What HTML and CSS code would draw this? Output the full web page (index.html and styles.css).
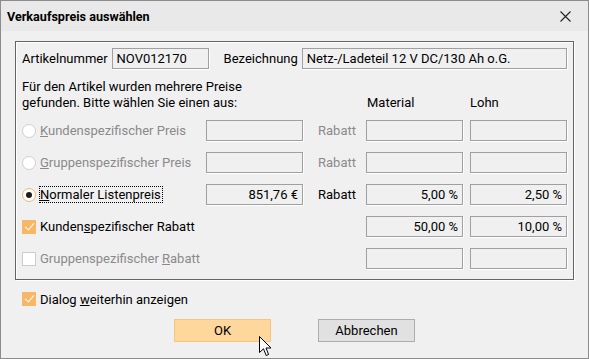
FILE: index.html
```html
<!DOCTYPE html>
<html lang="de">
<head>
    <meta charset="UTF-8">
    <title>Verkaufspreis auswählen</title>
    <link rel="stylesheet" href="styles.css">
</head>
<body>
    <div class="window">
        <div class="titlebar">
            <span class="title">Verkaufspreis auswählen</span>
            <svg class="close" width="11" height="11" viewBox="0 0 11 11">
                <path d="M0.5 0.5 L10.5 10.5 M10.5 0.5 L0.5 10.5" stroke="#222" stroke-width="1.1" fill="none"/>
            </svg>
        </div>

        <div class="content">
            <div class="group">
                <div class="top-row">
                    <span class="label">Artikelnummer</span>
                    <div class="field field-nr">NOV012170</div>
                    <span class="label label-bez">Bezeichnung</span>
                    <div class="field field-bez">Netz-/Ladeteil 12 V DC/130 Ah o.G.</div>
                </div>

                <div class="price-grid">
                    <div class="intro">Für den Artikel wurden mehrere Preise<br>gefunden. Bitte wählen Sie einen aus:</div>
                    <div class="col-head">Material</div>
                    <div class="col-head lohn">Lohn</div>

                    <!-- Kundenspezifischer Preis -->
                    <label class="option disabled"><span class="radio"></span><span><u>K</u>undenspezifischer Preis</span></label>
                    <div class="field"></div>
                    <span class="rabatt disabled">Rabatt</span>
                    <div class="field"></div>
                    <div class="field lohn"></div>

                    <!-- Gruppenspezifischer Preis -->
                    <label class="option disabled"><span class="radio"></span><span><u>G</u>ruppenspezifischer Preis</span></label>
                    <div class="field"></div>
                    <span class="rabatt disabled">Rabatt</span>
                    <div class="field"></div>
                    <div class="field lohn"></div>

                    <!-- Normaler Listenpreis -->
                    <label class="option"><span class="radio checked"></span><span class="focus"><u>N</u>ormaler Listenpreis</span></label>
                    <div class="field num">851,76 €</div>
                    <span class="rabatt">Rabatt</span>
                    <div class="field num">5,00 %</div>
                    <div class="field num lohn">2,50 %</div>

                    <!-- Rabatte -->
                    <label class="option"><span class="check checked"></span><span>Kunden<u>s</u>pezifischer Rabatt</span></label>
                    <span></span>
                    <span></span>
                    <div class="field num">50,00 %</div>
                    <div class="field num lohn">10,00 %</div>

                    <label class="option disabled clip"><span class="check"></span><span>Gruppenspezifischer <u>R</u>abatt</span></label>
                    <span></span>
                    <span></span>
                    <div class="field"></div>
                    <div class="field lohn"></div>
                </div>
            </div>

            <label class="option show-again"><span class="check checked"></span><span>Dialog <u>w</u>eiterhin anzeigen</span></label>

            <div class="buttons">
                <button class="btn btn-ok">OK</button>
                <button class="btn">Abbrechen</button>
            </div>
        </div>

        <svg class="cursor" width="13" height="21" viewBox="0 0 13 21">
            <path d="M0.5 0.5 L0.5 16.5 L4.5 12.8 L7.2 19.5 L9.6 18.5 L7 12 L12 12 Z" fill="#fff" stroke="#000" stroke-width="1"/>
        </svg>
    </div>
</body>
</html>
```

FILE: styles.css
```css
* {
    box-sizing: border-box;
}

body {
    margin: 0;
    font-family: Roboto, "Noto Sans", Arial, sans-serif;
    font-size: 13px;
    color: #000;
    background-color: #f0f0f0;
}

.window {
    position: relative;
    width: 589px;
    height: 359px;
    border: 1px solid #8c8c8c;
    background-color: #f0f0f0;
}

.titlebar {
    height: 30px;
    display: flex;
    align-items: center;
    justify-content: space-between;
    padding: 0 17px 0 6px;
    background-color: #e9e9e9;
}

.title {
    font-weight: bold;
    font-size: 12.6px;
}

.close {
    display: block;
}

.content {
    padding: 10px 14px 0 14px;
}

/* Gruppenrahmen mit 3D-Effekt */
.group {
    width: 559px;
    height: 239px;
    border: 1px solid #646464;
    box-shadow: 1px 1px 0 #fff, inset 1px 1px 0 #fff;
    padding: 6px 5px 0 6px;
}

.top-row {
    display: flex;
    align-items: center;
    height: 21px;
}

.label-bez {
    margin-left: 15px;
}

.field {
    height: 21px;
    border: 1px solid #a0a0a0;
    box-shadow: 1px 1px 0 #fff;
    background-color: #f0f0f0;
    padding: 0 4px;
    display: flex;
    align-items: center;
    white-space: nowrap;
    overflow: hidden;
}

.field-nr {
    width: 97px;
    margin-left: 4px;
}

.field-bez {
    width: 265px;
    margin-left: 4px;
}

.field.num {
    justify-content: flex-end;
}

.price-grid {
    display: grid;
    grid-template-columns: 184px 97px 63px 97px 104px;
    grid-template-rows: 30px repeat(5, 21px);
    row-gap: 11px;
    margin-top: 10px;
}

.intro {
    grid-column: 1 / 4;
    line-height: 16px;
}

.col-head {
    align-self: end;
    line-height: 16px;
    margin-bottom: -2px;
    padding-left: 1px;
}

/* Lohn-Spalte: 7px Abstand zur Material-Spalte */
.lohn {
    margin-left: 7px;
}

.col-head.lohn {
    padding-left: 0;
}

.rabatt {
    display: flex;
    align-items: center;
    padding-left: 15px;
}

.disabled {
    color: #8a8a8a;
}

.option {
    display: flex;
    align-items: center;
    gap: 4px;
    white-space: nowrap;
}

.option.clip {
    overflow: hidden;
    width: 178px;
}

.radio {
    width: 14px;
    height: 14px;
    border-radius: 50%;
    border: 1px solid #cfcfcf;
    background-color: #fff;
    flex-shrink: 0;
    display: flex;
    align-items: center;
    justify-content: center;
}

.radio.checked {
    border-color: #f5b56a;
}

.radio.checked::after {
    content: "";
    width: 6px;
    height: 6px;
    border-radius: 50%;
    background-color: #1c1c1c;
}

.focus {
    outline: 1px dotted #000;
    padding-right: 1px;
    line-height: 15px;
}

.check {
    width: 14px;
    height: 14px;
    border: 1px solid #cccccc;
    background-color: #fff;
    flex-shrink: 0;
    position: relative;
}

.check.checked {
    border-color: #f7b766;
    background-color: #f7b766;
}

.check.checked::after {
    content: "";
    position: absolute;
    left: 4px;
    top: 0;
    width: 4px;
    height: 8px;
    border: solid #fff;
    border-width: 0 1.5px 1.5px 0;
    transform: rotate(40deg);
}

.show-again {
    margin: 11px 0 0 7px;
    height: 16px;
}

.buttons {
    display: flex;
    justify-content: center;
    gap: 47px;
    margin: 12px -14px 0 -14px;
}

.btn {
    width: 97px;
    height: 23px;
    font-family: Roboto, "Noto Sans", Arial, sans-serif;
    font-size: 13px;
    color: #000;
    background-color: #e1e1e1;
    border: 1px solid #adadad;
    padding: 0;
}

.btn-ok {
    background-color: #fdd79b;
    border-color: #f7c57c;
}

.cursor {
    position: absolute;
    left: 258px;
    top: 335px;
}
```
